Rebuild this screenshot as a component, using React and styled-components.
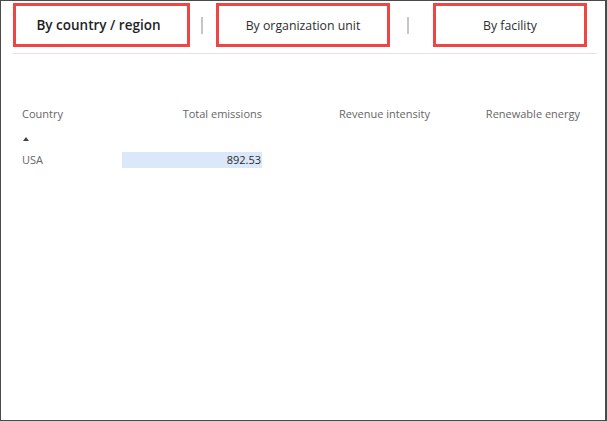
import React from "react";
import styled, { createGlobalStyle } from "styled-components";

const Global = createGlobalStyle`
  html, body { margin: 0; padding: 0; background: #fff; }
  body { font-family: "Open Sans", "Noto Sans", sans-serif; }
`;

const Frame = styled.div`
  box-sizing: border-box;
  width: 607px;
  height: 421px;
  border: 1px solid #4a4a4a;
  border-right-width: 2px;
  background: #fff;
  overflow: hidden;
`;

const TabBar = styled.div`
  display: flex;
  align-items: center;
  height: 44px;
  margin: 2px 8px 0 12px;
  padding-bottom: 6px;
  border-bottom: 1px solid #e4e4e4;
`;

const Tab = styled.div`
  box-sizing: border-box;
  width: ${({ $w }) => $w}px;
  height: 44px;
  margin-left: ${({ $ml }) => $ml || 0}px;
  border: 3px solid #f04545;
  display: flex;
  align-items: center;
  justify-content: center;
  padding-right: ${({ $pr }) => $pr || 0}px;
  font-size: ${({ $active }) => ($active ? "13.5px" : "12.3px")};
  font-weight: ${({ $active }) => ($active ? 600 : 400)};
  color: ${({ $active }) => ($active ? "#1f1f1f" : "#2e2e2e")};
  white-space: nowrap;
`;

const Divider = styled.div`
  width: 2px;
  height: 17px;
  margin-left: ${({ $ml }) => $ml}px;
  background: #c6c6c6;
`;

const Table = styled.div`
  display: grid;
  grid-template-columns: 100px 140px 168px 150px;
  padding: 52px 0 0 21px;
  font-size: 11px;
  color: #666;
`;

const Head = styled.div`
  text-align: ${({ $left }) => ($left ? "left" : "right")};
  line-height: 16px;
  white-space: nowrap;
`;

const SortRow = styled.div`
  grid-column: 1 / -1;
  height: 30px;
  display: flex;
  align-items: center;
  padding: 3px 0 0 1px;
  box-sizing: border-box;
`;

const Arrow = styled.div`
  width: 0;
  height: 0;
  border-left: 3.5px solid transparent;
  border-right: 3.5px solid transparent;
  border-bottom: 4px solid #444;
`;

const Cell = styled.div`
  line-height: 16px;
  white-space: nowrap;
`;

const BarCell = styled.div`
  position: relative;
  height: 16px;
  line-height: 16px;
  text-align: right;
  color: #2a2a2a;
`;

const Bar = styled.div`
  position: absolute;
  top: 0;
  bottom: 0;
  right: 0;
  background: #dae8fa;
`;

const Value = styled.span`
  position: relative;
  padding-right: 1px;
`;

const rows = [{ country: "USA", total: 892.53, max: 892.53 }];

export default function App() {
  return (
    <>
      <Global />
      <Frame>
        <TabBar>
          <Tab $w={177} $active $pr={6}>By country / region</Tab>
          <Divider $ml={11} />
          <Tab $w={174} $ml={13}>By organization unit</Tab>
          <Divider $ml={17} />
          <Tab $w={154} $ml={24}>By facility</Tab>
        </TabBar>
        <Table>
          <Head $left>Country</Head>
          <Head>Total emissions</Head>
          <Head>Revenue intensity</Head>
          <Head>Renewable energy</Head>
          <SortRow>
            <Arrow />
          </SortRow>
          {rows.map((r) => (
            <React.Fragment key={r.country}>
              <Cell>{r.country}</Cell>
              <BarCell>
                <Bar style={{ width: `${(r.total / r.max) * 100}%` }} />
                <Value>{r.total.toFixed(2)}</Value>
              </BarCell>
              <Cell />
              <Cell />
            </React.Fragment>
          ))}
        </Table>
      </Frame>
    </>
  );
}
